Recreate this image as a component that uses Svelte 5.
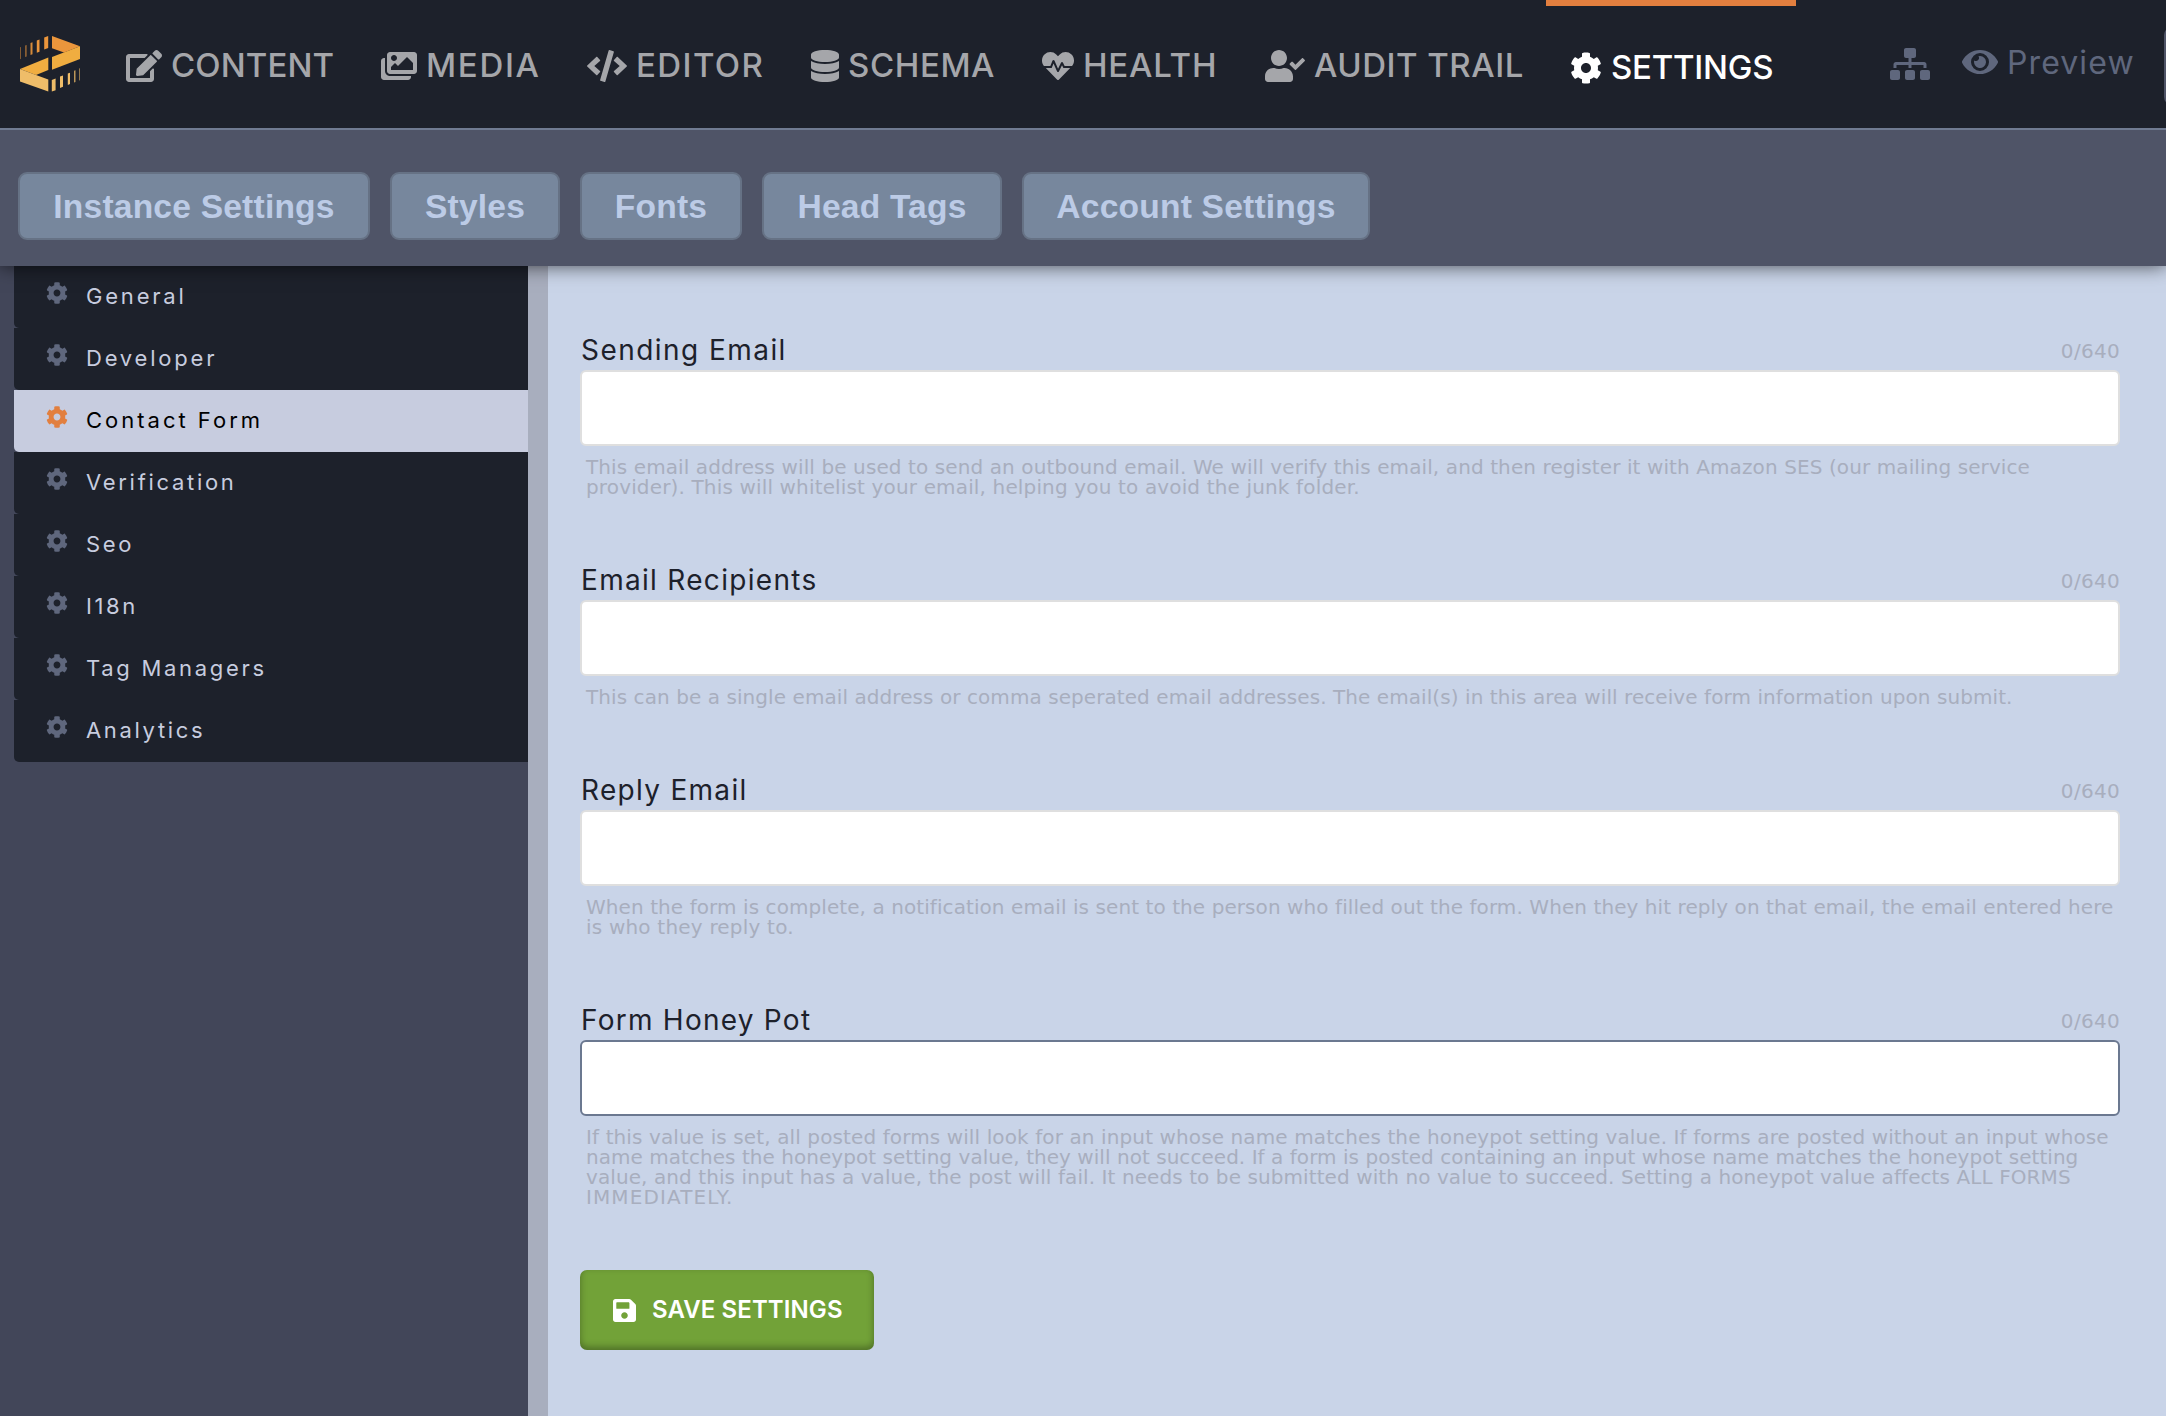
<script>
  const cog =
    'M487.4 315.7l-42.6-24.6c4.3-23.2 4.3-47 0-70.2l42.6-24.6c4.9-2.8 7.1-8.6 5.5-14-11.1-35.6-30-67.8-54.7-94.6-3.8-4.1-10-5.1-14.8-2.3L380.8 110c-17.9-15.4-38.5-27.3-60.8-35.1V25.8c0-5.6-3.9-10.5-9.4-11.7-36.7-8.2-74.3-7.8-109.2 0-5.5 1.2-9.4 6.1-9.4 11.7V75c-22.2 7.9-42.8 19.8-60.8 35.1L88.7 85.5c-4.9-2.8-11-1.9-14.8 2.3-24.7 26.7-43.6 58.9-54.7 94.6-1.7 5.4.6 11.2 5.5 14L67.3 221c-4.3 23.2-4.3 47 0 70.2l-42.6 24.6c-4.9 2.8-7.1 8.6-5.5 14 11.1 35.6 30 67.8 54.7 94.6 3.8 4.1 10 5.1 14.8 2.3l42.6-24.6c17.9 15.4 38.5 27.3 60.8 35.1v49.2c0 5.6 3.9 10.5 9.4 11.7 36.7 8.2 74.3 7.8 109.2 0 5.5-1.2 9.4-6.1 9.4-11.7v-49.2c22.2-7.9 42.8-19.8 60.8-35.1l42.6 24.6c4.9 2.8 11 1.9 14.8-2.3 24.7-26.7 43.6-58.9 54.7-94.6 1.5-5.5-.7-11.3-5.6-14.1zM256 336c-44.1 0-80-35.9-80-80s35.9-80 80-80 80 35.9 80 80-35.9 80-80 80z';

  // w: icon grid width, width: tab width, ls: tracking of the label
  const nav = [
    { label: 'CONTENT', w: 576, width: 255, ls: 0.1, d: 'M402.6 83.2l90.2 90.2c3.8 3.8 3.8 10 0 13.8L274.4 405.6l-92.8 10.3c-12.4 1.4-22.9-9.1-21.5-21.5l10.3-92.8L388.8 83.2c3.8-3.8 10-3.8 13.8 0zm162-22.9l-48.8-48.8c-15.2-15.2-39.9-15.2-55.2 0l-35.4 35.4c-3.8 3.8-3.8 10 0 13.8l90.2 90.2c3.8 3.8 10 3.8 13.8 0l35.4-35.4c15.2-15.3 15.2-40 0-55.2zM384 346.2V448H64V128h229.8c3.2 0 6.2-1.3 8.5-3.5l40-40c7.6-7.6 2.2-20.5-8.5-20.5H48C21.5 64 0 85.5 0 112v352c0 26.5 21.5 48 48 48h352c26.5 0 48-21.5 48-48V306.2c0-10.7-12.9-16-20.5-8.5l-40 40c-2.2 2.3-3.5 5.3-3.5 8.5z' },
    { label: 'MEDIA', w: 576, width: 206, ls: 1.7, d: 'M480 416v16c0 26.51-21.49 48-48 48H48c-26.51 0-48-21.49-48-48V176c0-26.51 21.49-48 48-48h16v208c0 44.112 35.888 80 80 80h336zm96-80V80c0-26.51-21.49-48-48-48H144c-26.51 0-48 21.49-48 48v256c0 26.51 21.49 48 48 48h384c26.51 0 48-21.49 48-48zM256 128c0 26.51-21.49 48-48 48s-48-21.49-48-48 21.49-48 48-48 48 21.49 48 48zm-96 144l55.515-55.515c4.686-4.686 12.284-4.686 16.971 0L272 256l135.515-135.515c4.686-4.686 12.284-4.686 16.971 0L512 208v112H160v-48z' },
    { label: 'EDITOR', w: 640, width: 224, ls: 1.4, d: 'M278.9 511.5l-61-17.7c-6.4-1.8-10-8.5-8.2-14.9L346.2 8.7c1.8-6.4 8.5-10 14.9-8.2l61 17.7c6.4 1.8 10 8.5 8.2 14.9L293.8 503.3c-1.9 6.4-8.5 10.1-14.9 8.2zm-114-112.2l43.5-46.4c4.6-4.9 4.3-12.7-.8-17.2L117 256l90.6-79.7c5.1-4.5 5.5-12.3.8-17.2l-43.5-46.4c-4.5-4.8-12.1-5.1-17-.5L3.8 247.2c-5.1 4.7-5.1 12.8 0 17.5l144.1 135.1c4.9 4.6 12.5 4.4 17-.5zm327.2.6l144.1-135.1c5.1-4.7 5.1-12.8 0-17.5L492.1 112.1c-4.8-4.5-12.4-4.3-17 .5L431.6 159c-4.6 4.9-4.3 12.7.8 17.2L523 256l-90.6 79.7c-5.1 4.5-5.5 12.3-.8 17.2l43.5 46.4c4.5 4.9 12.1 5.1 17 .6z' },
    { label: 'SCHEMA', w: 448, width: 231, ls: 0.6, d: 'M448 73.143v45.714C448 159.143 347.667 192 224 192S0 159.143 0 118.857V73.143C0 32.857 100.333 0 224 0s224 32.857 224 73.143zM448 176v102.857C448 319.143 347.667 352 224 352S0 319.143 0 278.857V176c48.125 33.143 136.208 48.572 224 48.572S399.874 209.143 448 176zm0 160v102.857C448 479.143 347.667 512 224 512S0 479.143 0 438.857V336c48.125 33.143 136.208 48.572 224 48.572S399.874 369.143 448 336z' },
    { label: 'HEALTH', w: 512, width: 223, ls: 0.8, d: 'M320.2 243.8l-49.7 99.4c-6 12.1-23.4 11.7-28.9-.6l-56.9-126.3-30 71.7H60.6l182.5 186.5c7.1 7.3 18.6 7.3 25.7 0L451.4 288H342.3l-22.1-44.2zM473.7 73.9l-2.4-2.5c-51.5-52.6-135.8-52.6-187.4 0L256 100l-27.9-28.5c-51.5-52.7-135.9-52.7-187.4 0l-2.4 2.4C-10.4 123.7-12.5 203 31 256h102.4l35.9-86.2c5.4-12.9 23.6-13.1 29.2-.4l58.2 129.3 49-97.9c5.9-11.8 22.7-11.8 28.6 0l27.6 55.2H481c43.5-53 41.4-132.3-7.3-182.1z' },
    { label: 'AUDIT TRAIL', w: 640, width: 305, ls: 0.5, d: 'M224 256c70.7 0 128-57.3 128-128S294.7 0 224 0 96 57.3 96 128s57.3 128 128 128zm89.6 32h-16.7c-22.2 10.2-46.9 16-72.9 16s-50.6-5.8-72.9-16h-16.7C60.2 288 0 348.2 0 422.4V464c0 26.5 21.5 48 48 48h352c26.5 0 48-21.5 48-48v-41.6c0-74.2-60.2-134.4-134.4-134.4zm323-128.4l-27.8-28.1c-4.6-4.7-12.1-4.7-16.8-.1l-104.8 104-45.5-45.8c-4.6-4.7-12.1-4.7-16.8-.1l-28.1 27.9c-4.7 4.6-4.7 12.1-.1 16.8l81.7 82.3c4.6 4.7 12.1 4.7 16.8.1l141.3-140.2c4.6-4.7 4.7-12.2.1-16.8z' },
    { label: 'SETTINGS', w: 512, width: 250, ls: -0.25, d: cog, active: true }
  ];

  const tabs = [
    { label: 'Instance Settings', width: 352 },
    { label: 'Styles', width: 170 },
    { label: 'Fonts', width: 162 },
    { label: 'Head Tags', width: 240 },
    { label: 'Account Settings', width: 348 }
  ];

  const menu = [
    { label: 'General', ls: 2.8 },
    { label: 'Developer', ls: 2.8 },
    { label: 'Contact Form', ls: 3 },
    { label: 'Verification', ls: 2.7 },
    { label: 'Seo', ls: 2.6 },
    { label: 'I18n', ls: 2.6 },
    { label: 'Tag Managers', ls: 2.7 },
    { label: 'Analytics', ls: 2.65 }
  ];
  const current = 'Contact Form';

  // each hint line carries its own tracking
  const fields = [
    { label: 'Sending Email', ls: 1.45, hint: [
      ['This email address will be used to send an outbound email. We will verify this email, and then register it with Amazon SES (our mailing service', 0.1],
      ['provider). This will whitelist your email, helping you to avoid the junk folder.', 0.15]
    ] },
    { label: 'Email Recipients', ls: 1.3, hint: [
      ['This can be a single email address or comma seperated email addresses. The email(s) in this area will receive form information upon submit.', 0.07]
    ] },
    { label: 'Reply Email', ls: 1.3, hint: [
      ['When the form is complete, a notification email is sent to the person who filled out the form. When they hit reply on that email, the email entered here', 0.075],
      ['is who they reply to.', 0.2]
    ] },
    { label: 'Form Honey Pot', ls: 1.25, focused: true, hint: [
      ['If this value is set, all posted forms will look for an input whose name matches the honeypot setting value. If forms are posted without an input whose', 0.11],
      ['name matches the honeypot setting value, they will not succeed. If a form is posted containing an input whose name matches the honeypot setting', 0.04],
      ['value, and this input has a value, the post will fail. It needs to be submitted with no value to succeed. Setting a honeypot value affects ALL FORMS', 0.085],
      ['IMMEDIATELY.', 1.1]
    ] }
  ];
</script>

<div class="app">
  <header class="topbar">
    <svg class="logo" viewBox="20 36 60 56" aria-hidden="true">
      <g fill="#eb963c">
        <path d="M52 36L80 46.2L64 52.6L52 48.2Z" />
        <path d="M44.2 37.4L48.2 36V48L44.2 49.4Z" />
        <path d="M36.8 40.6L39.5 39.6V51.8L36.8 52.8Z" />
        <path d="M30.5 43L32.5 42.2V54.2L30.5 55Z" opacity=".9" />
        <path d="M25.2 45.4L26.6 44.9V56.4L25.2 57Z" opacity=".65" />
        <path d="M20 47.2L20.7 47V58.8L20 59.2Z" opacity=".7" />
      </g>
      <g fill="#f0ad40">
        <path d="M80 46.2V59L52 69.8V57Z" />
        <path d="M48.3 57.6V70L36 75L20 69Z" />
      </g>
      <g fill="#efbd69">
        <path d="M20 69L36 75L48.3 79.6V91.6L20 81.6Z" />
        <path d="M51.8 80L55.6 78.6V90.2L51.8 91.6Z" />
        <path d="M60 76.6L63 75.4V86.8L60 88Z" />
        <path d="M67.8 73.6L70 72.8V84L67.8 84.9Z" />
        <path d="M74 70.8L75.5 70.2V82L74 82.6Z" opacity=".75" />
        <path d="M79.3 68.6L80 68.3V80.2L79.3 80.6Z" opacity=".8" />
      </g>
    </svg>

    <nav class="nav">
      {#each nav as item}
        <a class="nav-item" class:active={item.active} style:width="{item.width}px">
          <svg viewBox="0 0 {item.w} 512" width={item.w / 16} height="32" aria-hidden="true"><path d={item.d} /></svg>
          <span style:letter-spacing="{item.ls}px">{item.label}</span>
        </a>
      {/each}
    </nav>

    <div class="tools">
      <svg class="sitemap" viewBox="0 0 640 512" width="40" height="32" aria-hidden="true"><path d="M128 352H32c-17.67 0-32 14.33-32 32v96c0 17.67 14.33 32 32 32h96c17.67 0 32-14.33 32-32v-96c0-17.67-14.33-32-32-32zm-24-80h192v48h48v-48h192v48h48v-57.59c0-21.17-17.23-38.41-38.41-38.41H344v-64h40c17.67 0 32-14.33 32-32V32c0-17.67-14.33-32-32-32H256c-17.67 0-32 14.33-32 32v96c0 17.67 14.33 32 32 32h40v64H94.41C73.23 224 56 241.23 56 262.41V320h48v-48zm264 80h-96c-17.67 0-32 14.33-32 32v96c0 17.67 14.33 32 32 32h96c17.67 0 32-14.33 32-32v-96c0-17.67-14.33-32-32-32zm240 0h-96c-17.67 0-32 14.33-32 32v96c0 17.67 14.33 32 32 32h96c17.67 0 32-14.33 32-32v-96c0-17.67-14.33-32-32-32z" /></svg>
      <a class="preview">
        <svg viewBox="0 0 576 512" width="36" height="32" aria-hidden="true"><path d="M572.52 241.4C518.29 135.59 410.93 64 288 64S57.68 135.64 3.48 241.41a32.35 32.35 0 0 0 0 29.19C57.71 376.41 165.07 448 288 448s230.32-71.64 284.52-177.41a32.35 32.35 0 0 0 0-29.19zM288 400a144 144 0 1 1 144-144 143.93 143.93 0 0 1-144 144zm0-240a95.31 95.31 0 0 0-25.31 3.79 47.85 47.85 0 0 1-66.9 66.9A95.78 95.78 0 1 0 288 160z" /></svg>
        <span>Preview</span>
      </a>
      <div class="edge"></div>
    </div>
  </header>

  <div class="subnav">
    {#each tabs as tab}
      <button class="tab" style:width="{tab.width}px">{tab.label}</button>
    {/each}
  </div>

  <div class="body">
    <aside class="sidebar">
      <ul class="menu">
        {#each menu as item}
          <li class:active={item.label === current}>
            <svg viewBox="0 0 512 512" width="22" height="22" aria-hidden="true"><path d={cog} /></svg>
            <span style:letter-spacing="{item.ls}px">{item.label}</span>
          </li>
        {/each}
      </ul>
    </aside>

    <main class="form">
      {#each fields as field}
        <section class="field">
          <div class="field-head">
            <span class="label" style:letter-spacing="{field.ls}px">{field.label}</span>
            <span class="count">0/640</span>
          </div>
          <input type="text" aria-label={field.label} class:focused={field.focused} />
          <p class="hint">
            {#each field.hint as [line, ls]}<span style:letter-spacing="{ls}px">{line}</span>{/each}
          </p>
        </section>
      {/each}
      <button class="save">
        <svg viewBox="0 32 448 448" width="23" height="23" aria-hidden="true"><path d="M433.941 129.941l-83.882-83.882A48 48 0 0 0 316.118 32H48C21.49 32 0 53.49 0 80v352c0 26.51 21.49 48 48 48h352c26.51 0 48-21.49 48-48V163.882a48 48 0 0 0-14.059-33.941zM224 416c-35.346 0-64-28.654-64-64 0-35.346 28.654-64 64-64s64 28.654 64 64c0 35.346-28.654 64-64 64zm96-304.52V212c0 6.627-5.373 12-12 12H76c-6.627 0-12-5.373-12-12V108c0-6.627 5.373-12 12-12h228.52c3.183 0 6.235 1.264 8.485 3.515l3.48 3.48A11.996 11.996 0 0 1 320 111.48z" /></svg>
        <span>SAVE SETTINGS</span>
      </button>
    </main>
  </div>
</div>

<style>
  :global(body) {
    margin: 0;
    overflow: hidden;
  }

  .app {
    display: flex;
    flex-direction: column;
    width: 100vw;
    height: 100vh;
    overflow: hidden;
    background: #424659;
    font-family: Inter, "Liberation Sans", sans-serif;
  }

  .app * {
    box-sizing: border-box;
  }

  svg {
    flex: none;
    display: block;
    fill: currentColor;
  }

  .topbar {
    display: flex;
    flex: none;
    height: 130px;
    background: #1d212b;
    border-bottom: 2px solid #707b92;
    overflow: hidden;
    z-index: 2;
  }

  .logo {
    width: 60px;
    height: 56px;
    margin: 36px 22px 0 20px;
  }

  .nav {
    display: flex;
    flex: none;
    height: 128px;
  }

  .nav-item {
    display: flex;
    align-items: center;
    gap: 9px;
    padding: 4px 0 0 24px;
    color: #a5a6aa;
    font-size: 33px;
    font-weight: 500;
    line-height: 40px;
    white-space: nowrap;
  }

  .nav-item span {
    margin-top: -2px;
  }

  .nav-item.active {
    padding-top: 2px;
    border-top: 6px solid #e27f3f;
    color: #fff;
  }

  .tools {
    display: flex;
    flex: none;
    align-items: center;
    height: 128px;
    margin-left: 94px;
    color: #5f677d;
  }

  .preview {
    display: flex;
    align-items: center;
    gap: 9px;
    width: 202px;
    margin: 0 0 4px 32px;
    font-size: 32px;
    line-height: 40px;
    letter-spacing: 1.1px;
  }

  .preview span {
    padding-top: 2px;
  }

  .edge {
    width: 60px;
    height: 78px;
    margin-top: 4px;
    border-radius: 8px;
    background: #4f5467;
  }

  .subnav {
    display: flex;
    flex: none;
    gap: 20px;
    height: 136px;
    padding: 42px 18px 0;
    background: #4f5467;
    box-shadow: 0 0 18px rgba(0, 0, 0, 0.65);
    z-index: 1;
  }

  .tab {
    height: 68px;
    padding: 2px 0 0;
    border: 2px solid #667285;
    border-radius: 9px;
    background: #77879d;
    color: #bccbe6;
    font: 700 33.6px/40px "Liberation Sans", sans-serif;
    letter-spacing: 0.2px;
    white-space: nowrap;
  }

  .body {
    display: flex;
    flex: 1;
    min-height: 0;
  }

  .sidebar {
    flex: none;
    width: 548px;
    padding-left: 14px;
    border-right: 20px solid #a8aebe;
  }

  .menu {
    margin: 0;
    padding: 0;
    list-style: none;
  }

  .menu li {
    display: flex;
    align-items: center;
    gap: 18px;
    height: 62px;
    padding-left: 32px;
    border-bottom-left-radius: 5px;
    background: #1d212b;
    color: #c7ccdf;
    font-size: 22px;
    line-height: 30px;
  }

  .menu span {
    margin-top: -2px;
  }

  .menu svg {
    margin-top: -8px;
    color: #5f677d;
  }

  .menu li.active {
    background: #c7ccdf;
    color: #000;
  }

  .menu li.active svg {
    color: #e27f3f;
  }

  .form {
    flex: 1;
    min-width: 0;
    padding: 64px 46px 0 32px;
    background: #c9d4e8;
  }

  .field {
    margin-bottom: 63px;
  }

  .field-head {
    display: flex;
    justify-content: space-between;
    height: 40px;
    line-height: 40px;
  }

  .label {
    padding-left: 1px;
    color: #1d212b;
    font-size: 28px;
  }

  .count {
    margin-top: 1px;
    color: #a8aebe;
    font-family: "DejaVu Sans", sans-serif;
    font-size: 20px;
    letter-spacing: 0.3px;
  }

  input {
    display: block;
    width: 100%;
    height: 76px;
    padding: 0 20px;
    border: 2px solid #dfdfdf;
    border-radius: 6px;
    outline: none;
    background: #fff;
    font-size: 28px;
  }

  input.focused {
    border-color: #6b7890;
  }

  .hint {
    margin: 11px 0 0 6px;
    color: #a8aebe;
    font: 20px/20px "DejaVu Sans", sans-serif;
    white-space: nowrap;
  }

  .hint span {
    display: block;
  }

  .save {
    display: flex;
    align-items: center;
    gap: 16px;
    width: 294px;
    height: 80px;
    padding: 0 0 0 33px;
    border: 0;
    border-radius: 7px;
    background: #72a238;
    box-shadow: inset 0 -3px 7px rgba(0, 0, 0, 0.32);
    color: #fff;
    font: 600 24px/30px Inter, sans-serif;
    letter-spacing: 0.1px;
    white-space: nowrap;
  }
</style>
